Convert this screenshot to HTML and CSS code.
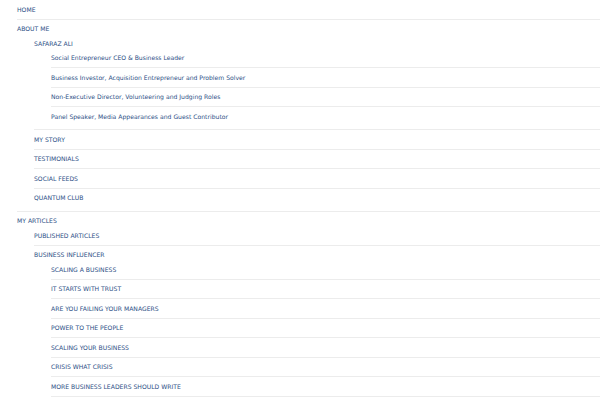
FILE: index.html
```html
<!DOCTYPE html>
<html lang="en">
<head>
    <meta charset="UTF-8">
    <meta name="viewport" content="width=device-width, initial-scale=1.0">
    <title>Menu</title>
    <link rel="stylesheet" href="styles.css">
</head>
<body>

    <nav class="menu">
        <ul>
            <li><a href="#">HOME</a></li>
            <li class="has-sub">
                <a href="#">ABOUT ME</a>
                <ul>
                    <li class="has-sub">
                        <a href="#">SAFARAZ ALI</a>
                        <ul>
                            <li><a href="#">Social Entrepreneur CEO &amp; Business Leader</a></li>
                            <li><a href="#">Business Investor, Acquisition Entrepreneur and Problem Solver</a></li>
                            <li><a href="#">Non-Executive Director, Volunteering and Judging Roles</a></li>
                            <li><a href="#">Panel Speaker, Media Appearances and Guest Contributor</a></li>
                        </ul>
                    </li>
                    <li><a href="#">MY STORY</a></li>
                    <li><a href="#">TESTIMONIALS</a></li>
                    <li><a href="#">SOCIAL FEEDS</a></li>
                    <li><a href="#">QUANTUM CLUB</a></li>
                </ul>
            </li>
            <li class="has-sub">
                <a href="#">MY ARTICLES</a>
                <ul>
                    <li><a href="#">PUBLISHED ARTICLES</a></li>
                    <li class="has-sub">
                        <a href="#">BUSINESS INFLUENCER</a>
                        <ul>
                            <li><a href="#">SCALING A BUSINESS</a></li>
                            <li><a href="#">IT STARTS WITH TRUST</a></li>
                            <li><a href="#">ARE YOU FAILING YOUR MANAGERS</a></li>
                            <li><a href="#">POWER TO THE PEOPLE</a></li>
                            <li><a href="#">SCALING YOUR BUSINESS</a></li>
                            <li><a href="#">CRISIS WHAT CRISIS</a></li>
                            <li class="com-linha"><a href="#">MORE BUSINESS LEADERS SHOULD WRITE</a></li>
                        </ul>
                    </li>
                </ul>
            </li>
        </ul>
    </nav>

</body>
</html>
```

FILE: styles.css
```css
body {
    font-family: "DejaVu Sans", Verdana, sans-serif;
    background-color: #ffffff;
    margin: 0;
    padding: 0;
}

.menu ul {
    list-style: none;
    margin: 0;
    padding: 0 0 0 17px;
}

.menu li {
    border-bottom: 1px solid #ececec;
}

.menu li:last-child {
    border-bottom: none;
}

.menu > ul > li:last-child,
.menu li.com-linha {
    border-bottom: 1px solid #ececec;
}

.menu a {
    display: block;
    color: #2d4f86;
    text-decoration: none;
    font-size: 6.1px;
    line-height: 9px;
    padding: 4.5px 0 5px;
}

/* item com submenu */
.menu .has-sub > a {
    padding-bottom: 1px;
}

.menu .has-sub > ul {
    padding-bottom: 3.5px;
}
```
